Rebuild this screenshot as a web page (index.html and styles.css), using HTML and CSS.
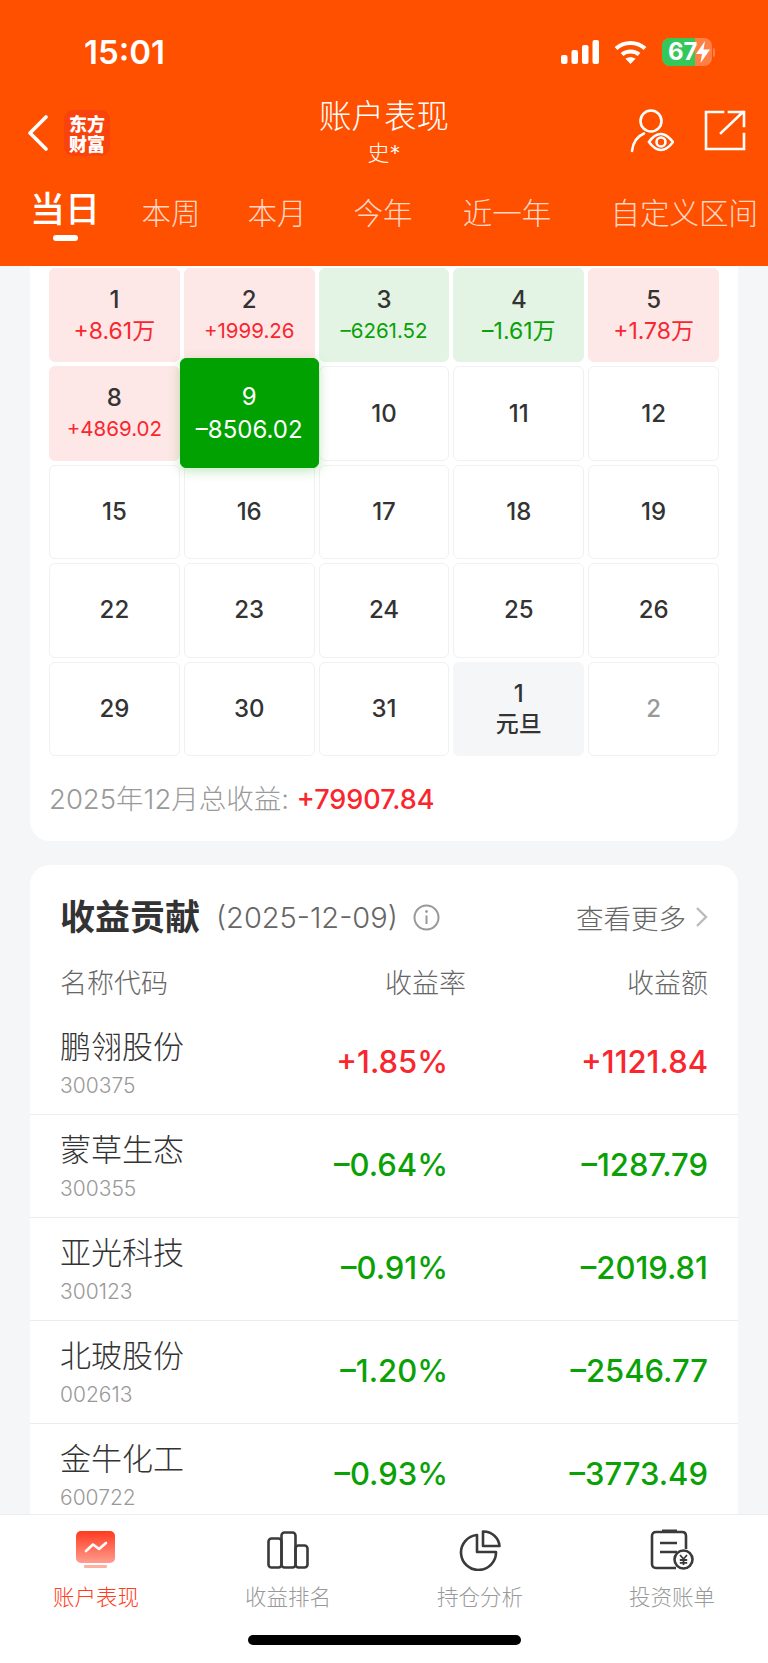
FILE: index.html
```html
<!DOCTYPE html>
<html lang="zh-CN">
<head>
  <meta charset="UTF-8" />
  <meta name="viewport" content="width=device-width, initial-scale=1.0"/>
  <title>账户表现</title>
  <link rel="stylesheet" href="styles.css">
</head>
<body>

  <header class="top">
    <div class="status">
      <span class="clock">15:01</span>
      <div class="status-icons">
        <svg width="38" height="24" viewBox="0 0 38 24" fill="#fff">
          <rect x="0" y="15" width="6.500" height="9" rx="2"/>
          <rect x="10.500" y="10" width="6.500" height="14" rx="2"/>
          <rect x="21" y="5" width="6.500" height="19" rx="2"/>
          <rect x="31.500" y="0" width="6.500" height="24" rx="2"/>
        </svg>
        <svg width="33" height="24" viewBox="0 0 33 24" fill="none" stroke="#fff" stroke-width="4">
          <path d="M2 8.500C10 1 23 1 31 8.500"/>
          <path d="M8 14.500C12.500 10.500 20.500 10.500 25 14.500"/>
          <path d="M16.500 24L11.500 18.800C14.500 16.800 18.500 16.800 21.500 18.800Z" fill="#fff" stroke="none"/>
        </svg>
        <div class="battery">
          <div class="battery-body">
            <div class="battery-fill"></div>
            <span class="battery-num">67</span>
            <svg class="battery-bolt" width="14" height="22" viewBox="0 0 14 22" fill="#fff">
              <path d="M9 0L0 13H6L4.500 22L14 8.500H7.500Z"/>
            </svg>
          </div>
          <div class="battery-nub"></div>
        </div>
      </div>
    </div>

    <div class="nav">
      <div class="nav-left">
        <svg width="22" height="36" viewBox="0 0 22 36" fill="none" stroke="#fff" stroke-width="3.600" stroke-linecap="round" stroke-linejoin="round">
          <path d="M19 2L3 18L19 34"/>
        </svg>
        <div class="logo">东方财富</div>
      </div>
      <div class="nav-title">
        <h1>账户表现</h1>
        <p>史*</p>
      </div>
      <div class="nav-right">
        <svg width="44" height="44" viewBox="0 0 44 44" fill="none" stroke="#fff" stroke-width="2.600" stroke-linecap="round">
          <circle cx="21" cy="12" r="10.500"/>
          <path d="M2 42C3 33 8 27 14 24.500"/>
          <path d="M19 33C23 27 27.500 25 31 25C35 25 39 28 43 33C39 38.500 35 41 31 41C27.500 41 23 38.500 19 33Z"/>
          <circle cx="31" cy="33" r="4.500"/>
        </svg>
        <svg width="42" height="42" viewBox="0 0 42 42" fill="none" stroke="#fff" stroke-width="2.600" stroke-linecap="square">
          <path d="M19 2H2V39H40V24"/>
          <path d="M17 23L39 2M25 2H40V16"/>
        </svg>
      </div>
    </div>

    <nav class="tabs">
      <span class="tab tab-on">当日</span>
      <span class="tab">本周</span>
      <span class="tab">本月</span>
      <span class="tab">今年</span>
      <span class="tab">近一年</span>
      <span class="tab tab-last">自定义区间</span>
    </nav>
  </header>

  <main class="content">
    <section class="card calendar">
      <div class="cal-grid">
        <div class="day up"><b>1</b><span class="big">+8.61万</span></div>
        <div class="day up"><b>2</b><span>+1999.26</span></div>
        <div class="day down"><b>3</b><span>–6261.52</span></div>
        <div class="day down"><b>4</b><span class="big">–1.61万</span></div>
        <div class="day up"><b>5</b><span class="big">+1.78万</span></div>
        <div class="day up"><b>8</b><span>+4869.02</span></div>
        <div class="day current"><b>9</b><span>–8506.02</span></div>
        <div class="day"><b>10</b></div>
        <div class="day"><b>11</b></div>
        <div class="day"><b>12</b></div>
        <div class="day"><b>15</b></div>
        <div class="day"><b>16</b></div>
        <div class="day"><b>17</b></div>
        <div class="day"><b>18</b></div>
        <div class="day"><b>19</b></div>
        <div class="day"><b>22</b></div>
        <div class="day"><b>23</b></div>
        <div class="day"><b>24</b></div>
        <div class="day"><b>25</b></div>
        <div class="day"><b>26</b></div>
        <div class="day"><b>29</b></div>
        <div class="day"><b>30</b></div>
        <div class="day"><b>31</b></div>
        <div class="day holiday"><b>1</b><b>元旦</b></div>
        <div class="day next-month"><b>2</b></div>
      </div>
      <p class="month-total">2025年12月总收益: <strong>+79907.84</strong></p>
    </section>

    <section class="card contrib">
      <div class="contrib-head">
        <h2>收益贡献</h2>
        <span class="contrib-date">(2025-12-09)</span>
        <svg width="27" height="27" viewBox="0 0 27 27" fill="none" stroke="#999" stroke-width="2">
          <circle cx="13.500" cy="13.500" r="12"/>
          <path d="M13.500 11.500V20"/>
          <circle cx="13.500" cy="7.500" r="1" fill="#999" stroke-width="1"/>
        </svg>
        <span class="more">查看更多</span>
        <svg class="more-arrow" width="13" height="22" viewBox="0 0 13 22" fill="none" stroke="#bbb" stroke-width="2.400">
          <path d="M2 2L11 11L2 20"/>
        </svg>
      </div>
      <div class="cols">
        <span>名称代码</span>
        <span>收益率</span>
        <span>收益额</span>
      </div>

      <div class="stock">
        <div class="stock-name">鹏翎股份<small>300375</small></div>
        <div class="val red">+1.85%</div>
        <div class="val red">+1121.84</div>
      </div>
      <div class="stock">
        <div class="stock-name">蒙草生态<small>300355</small></div>
        <div class="val green">–0.64%</div>
        <div class="val green">–1287.79</div>
      </div>
      <div class="stock">
        <div class="stock-name">亚光科技<small>300123</small></div>
        <div class="val green">–0.91%</div>
        <div class="val green">–2019.81</div>
      </div>
      <div class="stock">
        <div class="stock-name">北玻股份<small>002613</small></div>
        <div class="val green">–1.20%</div>
        <div class="val green">–2546.77</div>
      </div>
      <div class="stock">
        <div class="stock-name">金牛化工<small>600722</small></div>
        <div class="val green">–0.93%</div>
        <div class="val green">–3773.49</div>
      </div>
    </section>
  </main>

  <footer class="tabbar">
    <div class="bar-items">
      <div class="bar-item bar-on">
        <svg width="42" height="38" viewBox="0 0 42 38">
          <defs>
            <linearGradient id="screen" x1="0" y1="0" x2="0" y2="1">
              <stop offset="0" stop-color="#ff3a1f"/>
              <stop offset="1" stop-color="#ff9d8e"/>
            </linearGradient>
          </defs>
          <rect x="1" y="0" width="39" height="32" rx="5" fill="url(#screen)"/>
          <rect x="9" y="34" width="23" height="3" rx="1" fill="#ffb0a4"/>
          <path d="M11 20L18 13.500L24 18L31 12" fill="none" stroke="#fff" stroke-width="2.600" stroke-linecap="round" stroke-linejoin="round"/>
        </svg>
        <span>账户表现</span>
      </div>
      <div class="bar-item">
        <svg width="42" height="38" viewBox="0 0 42 38" fill="none" stroke="#3a3a3a" stroke-width="2.600">
          <rect x="1.500" y="7.500" width="13" height="29" rx="3"/>
          <rect x="14.500" y="1.500" width="14" height="35" rx="3"/>
          <rect x="28.500" y="14.500" width="12" height="22" rx="3"/>
        </svg>
        <span>收益排名</span>
      </div>
      <div class="bar-item">
        <svg width="42" height="40" viewBox="0 0 42 40" fill="none" stroke="#3a3a3a" stroke-width="2.600" stroke-linejoin="round">
          <path d="M18 5A17.500 17.500 0 1 0 37 22H18Z"/>
          <path d="M24 1.500A16 16 0 0 1 40.500 16H24Z"/>
        </svg>
        <span>持仓分析</span>
      </div>
      <div class="bar-item">
        <svg width="44" height="42" viewBox="0 0 44 42" fill="none" stroke="#3a3a3a" stroke-width="2.600">
          <path d="M26 39H6C3.500 39 2 37.500 2 35V7C2 4.500 3.500 3 6 3H32C34.500 3 36 4.500 36 7V20"/>
          <path d="M12 2H27" stroke-width="3"/>
          <path d="M10 14H27M10 23H27"/>
          <circle cx="33.500" cy="30.500" r="9" fill="#fff"/>
          <path d="M30 26L33.500 30L37 26M33.500 30V36M29.800 31H37.200M29.800 33.800H37.200" stroke-width="1.800"/>
        </svg>
        <span>投资账单</span>
      </div>
    </div>
    <div class="home-bar"></div>
  </footer>

</body>
</html>
```

FILE: styles.css
```css
* {
  box-sizing: border-box;
}

body {
  margin: 0;
  width: 768px;
  height: 1663px;
  overflow: hidden;
  display: flex;
  flex-direction: column;
  background: #f5f6f8;
  color: #333;
  font-family: Inter, "Noto Sans CJK SC", sans-serif;
}

/* header */
.top {
  height: 266px;
  flex: none;
  background: #ff5000;
  color: #fff;
  display: flex;
  flex-direction: column;
}

.status {
  height: 92px;
  padding: 34px 53px 0 84px;
  display: flex;
  justify-content: space-between;
  align-items: flex-start;
}

.clock {
  font-size: 33px;
  line-height: 36px;
  font-weight: 600;
}

.status-icons {
  display: flex;
  align-items: center;
  gap: 15px;
  padding-top: 4px;
}

.battery {
  display: flex;
  align-items: center;
  gap: 1px;
}

.battery-body {
  position: relative;
  width: 50px;
  height: 28px;
  border-radius: 8px;
  background: rgba(255, 255, 255, 0.28);
  overflow: hidden;
}

.battery-nub {
  width: 2px;
  height: 9px;
  border-radius: 0 2px 2px 0;
  background: rgba(255, 255, 255, 0.28);
}

.battery-fill {
  width: 33px;
  height: 100%;
  background: #34c759;
}

.battery-num {
  position: absolute;
  left: 6px;
  top: 0;
  font-size: 24px;
  line-height: 28px;
  font-weight: 700;
}

.battery-bolt {
  position: absolute;
  left: 34px;
  top: 3px;
}

.nav {
  height: 84px;
  display: grid;
  grid-template-columns: 1fr auto 1fr;
  align-items: center;
  padding: 0 22px 0 27px;
}

.nav-left {
  display: flex;
  align-items: center;
  gap: 15px;
  padding-bottom: 3px;
}

.logo {
  width: 46px;
  height: 46px;
  padding: 3px 5px;
  border-radius: 9px;
  background: #f9430c;
  font-family: "Noto Sans CJK SC", sans-serif;
  font-size: 18px;
  line-height: 20px;
  font-weight: 900;
  text-align: center;
}

.nav-title {
  text-align: center;
  padding-bottom: 5px;
  margin-left: -5px;
}

.nav-title h1 {
  margin: 0;
  font-size: 32.500px;
  line-height: 42px;
  font-weight: 300;
}

.nav-title p {
  margin: 0;
  font-size: 22px;
  line-height: 30px;
  font-weight: 300;
}

.nav-right {
  display: flex;
  justify-content: flex-end;
  align-items: center;
  gap: 30px;
  padding-bottom: 6px;
}

.tabs {
  display: grid;
  grid-template-columns: 106px 106px 106px 106px 142px 1fr;
  padding: 15px 10px 0 12px;
  align-items: center;
}

.tab {
  position: relative;
  text-align: center;
  font-size: 29.500px;
  line-height: 44px;
  font-weight: 300;
  color: rgba(255, 255, 255, 0.78);
}

.tab-on {
  font-size: 35px;
  font-weight: 500;
  color: #fff;
  top: -4px;
}

.tab-on::after {
  content: "";
  position: absolute;
  left: 41px;
  bottom: -10px;
  width: 25px;
  height: 6px;
  border-radius: 3px;
  background: #fff;
}

.tab-last {
  justify-self: end;
}

/* scrolling part */
.content {
  flex: 1;
  min-height: 0;
  overflow: hidden;
  padding: 0 30px;
  display: flex;
  flex-direction: column;
  gap: 24px;
}

.card {
  background: #fff;
  border-radius: 20px;
  flex: none;
}

.calendar {
  padding: 2px 19px 0;
  border-radius: 0 0 20px 20px;
  height: 575px;
}

.cal-grid {
  display: grid;
  grid-template-columns: repeat(5, 1fr);
  grid-auto-rows: 94.400px;
  gap: 4px;
}

.day {
  border: 1px solid #f1f1f1;
  border-radius: 6px;
  display: flex;
  flex-direction: column;
  align-items: center;
  justify-content: center;
  gap: 3px;
  font-size: 20.500px;
  line-height: 28px;
}

.day b {
  font-size: 24px;
  font-weight: 500;
  color: #333;
}

.day.up {
  background: #fee7e7;
  border-color: #fee7e7;
  color: #f9262e;
}

.day.down {
  background: #e3f4e5;
  border-color: #e3f4e5;
  color: #0aa106;
}

.day .big {
  font-size: 23px;
}

.day.current {
  margin: -8px -4px -7px -4px;
  position: relative;
  z-index: 2;
  gap: 5px;
  background: #00a100;
  border-color: #00a100;
  color: #fff;
  font-size: 24px;
  box-shadow: 0 3px 12px rgba(0, 161, 0, 0.25);
}

.day.current b {
  color: #fff;
  font-weight: 400;
}

.day.holiday {
  background: #f5f6f8;
  border-color: #f5f6f8;
  gap: 2px;
}

.day.holiday b + b {
  font-size: 23px;
}

.day.next-month b {
  color: #999;
}

.month-total {
  margin: 25px 0 0;
  font-size: 27.500px;
  line-height: 36px;
  color: #999;
  font-weight: 300;
}

.month-total strong {
  font-size: 27px;
  font-weight: 500;
  color: #f9262e;
}

.contrib {
  padding: 32px 0 0;
  border-radius: 20px 20px 0 0;
}

.contrib-head {
  display: flex;
  align-items: center;
  padding: 0 30px;
  height: 40px;
}

.contrib-head h2 {
  margin: 0 16px 0 0;
  font-size: 35px;
  line-height: 40px;
  font-weight: 700;
}

.contrib-date {
  font-size: 29px;
  font-weight: 300;
  color: #666;
  margin-right: 15px;
}

.more {
  margin-left: auto;
  font-size: 27.500px;
  font-weight: 300;
  color: #666;
}

.more-arrow {
  margin-left: 9px;
}

.cols {
  display: grid;
  grid-template-columns: 1fr 150px 242px;
  padding: 0 30px 8px;
  margin-top: 27px;
  font-size: 27px;
  line-height: 40px;
  font-weight: 300;
  color: #666;
}

.cols span + span {
  text-align: right;
}

.stock {
  display: grid;
  grid-template-columns: 1fr 180px 260px;
  align-items: center;
  height: 103px;
  padding: 0 30px;
  border-bottom: 1px solid #ececec;
}

.stock-name {
  font-size: 31px;
  line-height: 44px;
  font-weight: 300;
  color: #333;
}

.stock-name small {
  display: block;
  margin-top: 2px;
  font-size: 21px;
  line-height: 30px;
  color: #999;
}

.val {
  text-align: right;
  font-size: 31px;
  font-weight: 500;
  padding-bottom: 3px;
}

.red {
  color: #f9262e;
}

.green {
  color: #0aa106;
}

/* bottom bar */
.tabbar {
  height: 149px;
  flex: none;
  background: #fff;
  border-top: 1px solid #eee;
  position: relative;
  z-index: 3;
}

.bar-items {
  display: grid;
  grid-template-columns: repeat(4, 1fr);
  padding-top: 14px;
}

.bar-item {
  display: flex;
  flex-direction: column;
  align-items: center;
  gap: 11px;
  font-size: 21.500px;
  line-height: 30px;
  font-weight: 300;
  color: #999;
}

.bar-item svg {
  height: 42px;
}

.bar-on {
  color: #ff3b20;
}

.home-bar {
  width: 273px;
  height: 10px;
  border-radius: 5px;
  background: #000;
  margin: 23px auto 0;
}
```
